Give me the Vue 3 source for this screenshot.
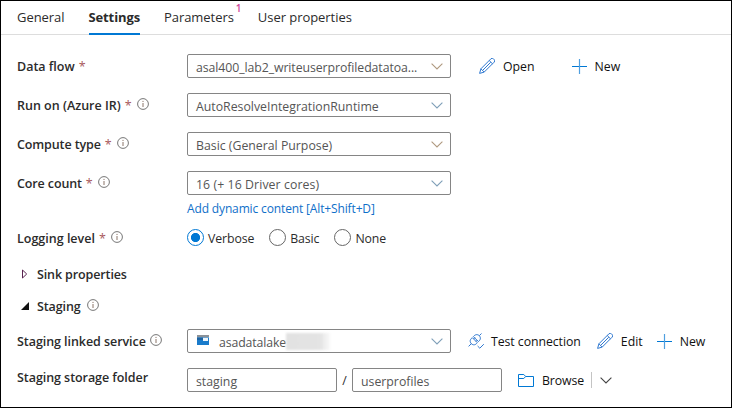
<script setup>
import { h, ref } from 'vue'

const tabs = [
  { name: 'General' },
  { name: 'Settings', active: true },
  { name: 'Parameters', badge: '1' },
  { name: 'User properties' },
]
const fields = [
  { label: 'Data flow', value: 'asal400_lab2_writeuserprofiledatatoa...', tight: true, warm: true, actions: true },
  { label: 'Run on (Azure IR)', value: 'AutoResolveIntegrationRuntime', info: true },
  { label: 'Compute type', value: 'Basic (General Purpose)', info: true, warm: true, slim: true },
  { label: 'Core count', value: '16 (+ 16 Driver cores)', info: true, loose: true, slim: true },
]
const levels = ['Verbose', 'Basic', 'None']
const level = ref('Verbose')

const svg = (cls, w, hgt, children) =>
  h('svg', { class: cls, width: w, height: hgt, viewBox: `0 0 ${w} ${hgt}`, fill: 'none' }, children)

const InfoIcon = () => svg('info', 12, 12, [
  h('circle', { cx: 6, cy: 6, r: 5.4, stroke: '#666', 'stroke-width': 0.9 }),
  h('path', { d: 'M6 5v4M6 2.9v1.1', stroke: '#8a7468', 'stroke-width': 1 }),
])
const Chevron = (props) => svg('chevron', 12, 7, [
  h('path', { d: 'M.6.6 6 6 11.4.6', stroke: props.color, 'stroke-width': 1.1 }),
])
Chevron.props = ['color']
const Pencil = () => svg('pencil', 16, 16, [
  h('path', { d: 'M.6 15.4 1.9 10.8 11.8.9a1.9 1.9 0 0 1 2.7 0l.6.6a1.9 1.9 0 0 1 0 2.7L5.2 14.1ZM1.9 10.8l3.3 3.3M10.2 2.5l3.3 3.3M11.7 4.3 4 12', stroke: '#2f78d0', 'stroke-width': 1 }),
])
const Plus = () => svg('plus', 15, 15, [
  h('path', { d: 'M0 7.5h15', stroke: '#0078d4', 'stroke-width': 1 }),
  h('path', { d: 'M7.5 0v15', stroke: '#4f9fe0', 'stroke-width': 1.2 }),
])
const Plug = () => svg('plug', 16, 16, [
  h('path', { d: 'M.6 13.400 3.300 10.700M3.300 10.700C1.500 8.600 1.900 6.400 4.300 4.700L9.300 9.700C7.600 12.100 5.300 12.500 3.300 10.700ZM5.400 3.600 10.400 8.600C12.500 7 13.100 4.800 11.300 2.700 9.300.9 7 1.500 5.400 3.600ZM11.300 2.700 13.500.5M5.500 6 7 4.500M8 8.500 9.500 7', stroke: '#2f78d0', 'stroke-width': 1 }),
  h('path', { d: 'M9.600 13l2.200 2.200 4-4', stroke: '#2f78d0', 'stroke-width': 1 }),
])
const Folder = () => svg('folder', 16, 13, [
  h('path', { d: 'M.5 12.500V.5h5.300l1.900 2h7.800v10ZM.5 4.500h5.300l1.900-2', stroke: '#0078d4', 'stroke-width': 1 }),
])
const Storage = () => svg('storage', 12, 10, [
  h('path', { d: 'M0 0h12v2.500H0z', fill: '#8b9299' }),
  h('path', { d: 'M0 2.500h12V10H0z', fill: '#1a7bcb' }),
  h('path', { d: 'M0 2.500h6V5H0z', fill: '#1d62a0' }),
  h('path', { d: 'M6 3h5v3H6z', fill: '#eef6fc' }),
])
</script>

<template>
  <main class="panel">
    <nav class="tabs">
      <a v-for="t in tabs" :key="t.name" class="tab" :class="{ active: t.active }">
        {{ t.name }}<sup v-if="t.badge" class="badge">{{ t.badge }}</sup>
      </a>
    </nav>

    <form class="form">
      <div v-for="f in fields" :key="f.label" class="row">
        <label class="label"><span :class="{ slim: f.slim }">{{ f.label }}</span><i class="star">*</i><InfoIcon v-if="f.info" /></label>
        <div class="box select">
          <span class="value" :class="{ tight: f.tight, loose: f.loose }">{{ f.value }}</span>
          <Chevron :color="f.warm ? '#b09a80' : '#7f9fb8'" />
        </div>
        <div v-if="f.actions" class="actions flow">
          <span class="action"><Pencil />Open</span>
          <span class="action"><Plus />New</span>
        </div>
      </div>

      <a class="dynamic">Add dynamic content [Alt+Shift+D]</a>

      <div class="row logging">
        <label class="label"><span>Logging level</span><i class="star">*</i><InfoIcon /></label>
        <div class="radios">
          <span v-for="l in levels" :key="l" class="radio" :class="{ on: l === level }" @click="level = l">
            <i class="dot"></i><span>{{ l }}</span>
          </span>
        </div>
      </div>

      <div class="group sink">
        <svg class="arrow" width="8" height="10" viewBox="0 0 8 10"><path d="M1.500 1v8L5.700 5Z" fill="#fff" stroke="#5a2450" /></svg>
        <span class="slim">Sink properties</span>
      </div>
      <div class="group staging">
        <svg class="arrow" width="8" height="8" viewBox="0 0 8 8"><path d="M8 0v8H0Z" fill="#111" /></svg>
        <span class="slim">Staging</span><InfoIcon />
      </div>

      <div class="row linked">
        <label class="label"><span class="narrow">Staging linked service</span><InfoIcon /></label>
        <div class="box select">
          <Storage />
          <span class="value slim">asadatalake</span>
          <span class="redacted"></span>
          <Chevron color="#7f9fb8" />
        </div>
        <div class="actions service">
          <span class="action test"><Plug />Test connection</span>
          <span class="action edit"><Pencil />Edit</span>
          <span class="action"><Plus />New</span>
        </div>
      </div>

      <div class="row folders">
        <label class="label"><span class="narrow">Staging storage folder</span></label>
        <div class="box path"><span class="value">staging</span></div>
        <span class="slash">/</span>
        <div class="box path"><span class="value">userprofiles</span></div>
        <div class="actions browse">
          <span class="action"><Folder />Browse</span>
          <i class="divider"></i>
          <Chevron color="#444" />
        </div>
      </div>
    </form>
  </main>
</template>

<style>
body { margin: 0; background: #fff; }
</style>

<style scoped>
.panel {
  box-sizing: border-box;
  width: 732px;
  height: 408px;
  border: 1px solid #000;
  background: #fff;
  color: #2b2b2b;
  font: 12.3px/24px "Open Sans", "Noto Sans", sans-serif;
  overflow: hidden;
}
i { font-style: normal; }
svg { flex: none; display: block; }
.tabs {
  display: flex;
  gap: 24px;
  box-sizing: border-box;
  height: 34px;
  padding-left: 16px;
  border-bottom: 1px solid #ddd;
  font-size: 13px;
  line-height: 33px;
}
.tab { position: relative; height: 32px; letter-spacing: -0.05px; white-space: nowrap; }
.active { font-weight: 700; border-bottom: 2px solid #0078d4; letter-spacing: -0.12px; }
.badge {
  position: absolute;
  left: 100%;
  top: 1px;
  margin-left: 2px;
  color: #d0479c;
  font-size: 10px;
  font-weight: 600;
  line-height: 12px;
}
.form { padding: 19px 0 0 16px; }
.row { display: flex; height: 24px; margin-bottom: 15px; }
.label {
  box-sizing: border-box;
  display: flex;
  align-items: center;
  width: 170px;
  padding-top: 1px;
  flex: none;
  white-space: nowrap;
}
.label, .group { font-size: 12.5px; font-weight: 600; }
.narrow { letter-spacing: -0.06px; }
.slim { letter-spacing: -0.12px; }
.star { margin-left: 4px; color: #a8575b; font-weight: 400; }
.label .info { margin: 0 0 3px 5px; }
.label .narrow + .info { margin-left: 4.5px; }
.box {
  box-sizing: border-box;
  display: flex;
  align-items: center;
  height: 24px;
  padding-left: 8px;
  border: 1px solid #858585;
  border-radius: 2px;
  color: #555;
  white-space: nowrap;
}
.value { padding-top: 4px; }
.path .value { padding-top: 3px; }
.tight { letter-spacing: -0.08px; }
.loose { letter-spacing: 0.08px; }
.select { width: 264px; padding-right: 7px; }
.select .chevron { margin: 0 0 0 auto; }
.actions { display: flex; align-items: center; color: #111; white-space: nowrap; }
.action { display: flex; align-items: center; gap: 8px; padding-top: 1px; }
.action svg { margin-bottom: 1px; }
.flow { margin-left: 28px; gap: 37px; }
.dynamic {
  display: block;
  width: max-content;
  margin: -8px 0 0 170px;
  height: 14px;
  color: #0f6fc9;
  font-size: 12px;
  letter-spacing: -0.14px;
  line-height: 14px;
}
.logging { margin: 10px 0 12px; }
.radios { display: flex; gap: 15px; letter-spacing: -0.1px; }
.radio { display: flex; align-items: center; gap: 4px; }
.radio span { padding-top: 1px; }
.dot {
  box-sizing: border-box;
  width: 17px;
  height: 17px;
  margin-bottom: 1px;
  border: 1px solid #666;
  border-radius: 50%;
}
.on .dot {
  border-color: #0078d4;
  background: radial-gradient(circle, #0078d4 4.2px, transparent 5px);
}
.group { display: flex; align-items: center; height: 24px; padding-left: 4px; }
.group span { padding-top: 1px; }
.arrow { width: 8px; margin-right: 8px; }
.group .info { margin: 0 0 2px 6px; }
.sink { margin-bottom: 8px; }
.staging { margin-bottom: 11px; }
.folders .label { padding: 0 0 4px; }
.storage { margin: 0 10px 2px 1px; }
.redacted {
  width: 46px;
  height: 17px;
  background: linear-gradient(90deg, #e2e2e2 0%, #e4e4e4 75%, transparent 100%);
  filter: blur(1px);
}
.service { margin-left: 17px; }
.test { gap: 7px; letter-spacing: -0.06px; }
.edit { margin: 0 14px 0 16px; }
.path { width: 150px; }
.slash { width: 15px; padding-top: 1px; text-align: center; }
.browse { margin-left: 16px; }
.browse .action { gap: 8px; letter-spacing: -0.1px; }
.divider { width: 1px; height: 16px; margin: 0 8px 0 7px; background: #c4c4c4; }
</style>
